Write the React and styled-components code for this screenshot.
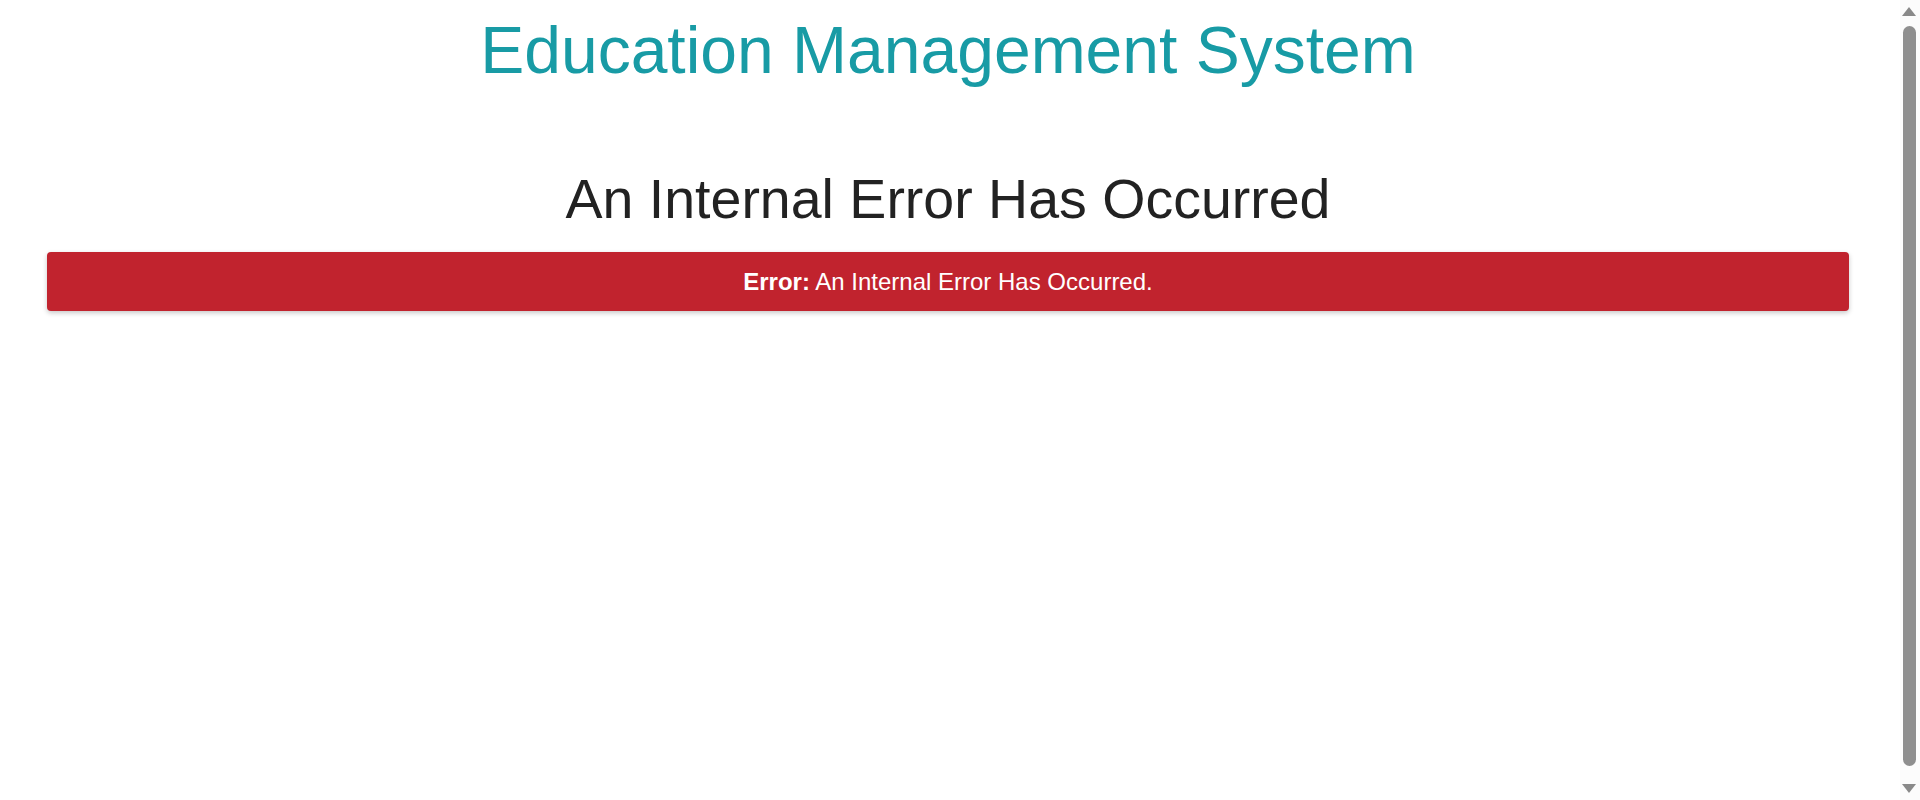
import React from "react";
import styled, { createGlobalStyle } from "styled-components";

const GlobalStyle = createGlobalStyle`
  html, body {
    margin: 0;
    padding: 0;
    background: #ffffff;
  }
  body {
    font-family: "Liberation Sans", Arial, sans-serif;
  }
`;

const Page = styled.div`
  min-height: 820px;
  box-sizing: border-box;
  padding: 10px 71px 0 47px;
  display: flex;
  flex-direction: column;
  align-items: stretch;
`;

const SiteTitle = styled.h1`
  margin: 0;
  font-weight: 400;
  font-size: 66px;
  line-height: 80px;
  color: #189ba5;
  text-align: center;
`;

const ErrorHeading = styled.h2`
  margin: 76px 0 0;
  font-weight: 400;
  font-size: 55.5px;
  line-height: 66px;
  color: #222222;
  text-align: center;
`;

const Alert = styled.div`
  margin-top: 20px;
  height: 59px;
  box-sizing: border-box;
  display: flex;
  align-items: center;
  justify-content: center;
  background: #c1232e;
  color: #ffffff;
  border-radius: 4px;
  box-shadow: 0 2px 5px rgba(0, 0, 0, 0.22);
  font-size: 24px;
  white-space: pre;
`;

const Label = styled.strong`
  font-weight: 700;
`;

/* Visual stand-in for the browser's vertical scrollbar, which lies over the page edge */
const ScrollRail = styled.div`
  position: fixed;
  top: 0;
  right: 0;
  bottom: 0;
  width: 20px;
  background: #fcfcfc;
  display: flex;
  flex-direction: column;
  align-items: center;
  padding-right: 2px;
  box-sizing: border-box;
`;

const Arrow = styled.svg`
  display: block;
  flex: none;
  margin: ${(p) => (p.$down ? "0 0 7px" : "7px 0 0")};
`;

const Thumb = styled.div`
  flex: none;
  width: 13px;
  height: 740px;
  margin: ${"10px 0 16px"};
  border-radius: 7px;
  background: #8f8f8f;
`;

const Spacer = styled.div`
  flex: 1;
`;

function Scrollbar() {
  return (
    <ScrollRail aria-hidden="true">
      <Arrow width="14" height="9" viewBox="0 0 14 9">
        <polygon points="7,0 14,9 0,9" fill="#8a8a8a" />
      </Arrow>
      <Thumb />
      <Spacer />
      <Arrow $down width="14" height="9" viewBox="0 0 14 9">
        <polygon points="0,0 14,0 7,9" fill="#8a8a8a" />
      </Arrow>
    </ScrollRail>
  );
}

export default function App() {
  return (
    <>
      <GlobalStyle />
      <Page>
        <SiteTitle>Education Management System</SiteTitle>
        <ErrorHeading>An Internal Error Has Occurred</ErrorHeading>
        <Alert>
          <Label>Error:</Label> An Internal Error Has Occurred.
        </Alert>
      </Page>
      <Scrollbar />
    </>
  );
}
